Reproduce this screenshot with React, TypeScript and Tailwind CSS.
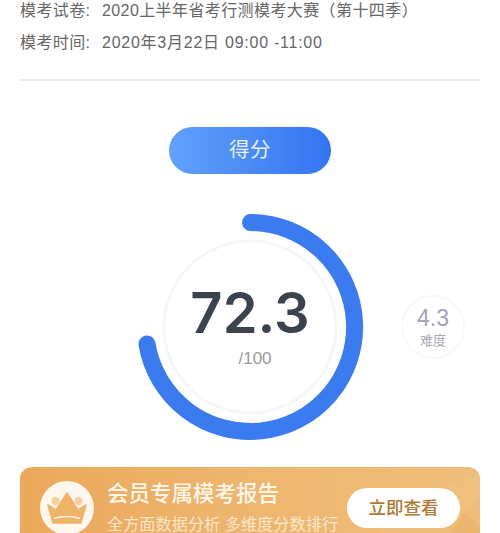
export default function App() {
  return (
    <div className="relative h-[533px] w-[500px] overflow-hidden bg-white font-['Liberation_Sans','Noto_Sans_CJK_SC',sans-serif]">
      <div className="-mt-[1px] px-5">
        <div className="flex flex-col gap-[8px] text-[16px] leading-[24px] tracking-[0.4px] text-[#666666]">
          <div className="flex"><span className="w-[82px]">模考试卷:</span><span>2020上半年省考行测模考大赛{"\uFF08"}第十四季{"\uFF09"}</span></div>
          <div className="flex"><span className="w-[82px]">模考时间:</span><span className="tracking-[0.75px]">2020年3月22日 09:00 -11:00</span></div>
        </div>
        <div className="mt-[24px] h-[2px] bg-[#e8e8e8]" />
      </div>
      <div className="mt-[46px] flex justify-center">
        <div className="flex h-[47px] w-[162px] items-center justify-center rounded-full bg-gradient-to-r from-[#62a1fb] to-[#3374f2] text-[20.5px] tracking-[0.5px] text-[#e8f0fd]">得分</div>
      </div>
      <div className="mt-[33px] flex h-[240px] items-center pl-[130px]">
        <div className="relative h-[240px] w-[240px] shrink-0">
          <svg viewBox="0 0 240 240" className="h-[240px] w-[240px]">
            <circle cx="120" cy="120" r="86" fill="#fff" stroke="#f6f6f7" strokeWidth="3" />
            <path d="M120.5 15.5 A104.5 104.5 0 1 1 17 137" fill="none" stroke="#3b7bf0" strokeWidth="17" strokeLinecap="round" />
          </svg>
          <div className="absolute inset-0 flex flex-col items-center">
            <div className="mt-[74px] font-['Inter'] text-[56px] font-semibold leading-[64px] text-[#3a434e]">72.3</div>
            <div className="ml-[10px] mt-[4px] text-[17px] leading-[20px] text-[#9a9a9a]">/100</div>
          </div>
        </div>
        <div className="ml-[31px] flex h-[64px] w-[64px] shrink-0 flex-col items-center justify-center rounded-full border-2 border-[#f8f8f9]">
          <div className="text-[23px] leading-[24px] text-[#a3a3b3]">4.3</div>
          <div className="mt-[3px] text-[13px] leading-[16px] text-[#a8a8b4]">难度</div>
        </div>
      </div>
      <div className="relative mx-5 mt-[20px] flex h-[80px] items-start overflow-hidden rounded-t-[12px] bg-gradient-to-r from-[#eba85a] via-[#eeb66e] to-[#efbd79] pl-[20px]">
        <svg viewBox="0 0 460 80" className="absolute inset-0 h-[80px] w-[460px]">
          <path d="M340 80 L400 30 L460 5 V30 L400 80 Z" fill="#f3c788" opacity="0.3" />
          <path d="M420 80 L445 45 L460 60 V80 Z" fill="#eaae62" opacity="0.5" />
        </svg>
        <div className="relative mt-[14px] flex h-[54px] w-[54px] shrink-0 items-center justify-center rounded-full bg-[#fdf7ee]">
          <svg viewBox="0 0 54 54" className="h-[54px] w-[54px]">
            <circle cx="15.5" cy="20" r="4" fill="#f4cf9f" />
            <circle cx="38.5" cy="20" r="4" fill="#f4cf9f" />
            <path d="M8 24 L16 29 L27 12 L38 29 L46 24 L41 42 H13 Z" fill="#eeb468" stroke="#eeb468" strokeWidth="1.5" strokeLinejoin="round" />
            <path d="M14 37.5 Q27 33.5 40 37.5" fill="none" stroke="#fdf3e4" strokeWidth="1.5" />
          </svg>
        </div>
        <div className="relative ml-[13px] mt-[13px] w-[240px] shrink-0">
          <div className="text-[21.5px] font-medium leading-[28px] text-[#fff6ea]">会员专属模考报告</div>
          <div className="mt-[5px] text-[16.2px] leading-[22px] text-[#fbe7cc]">全方面数据分析 多维度分数排行</div>
        </div>
        <div className="relative mt-[21px] flex h-[40px] w-[113px] shrink-0 items-center justify-center rounded-full bg-white text-[17.5px] font-medium text-[#b07a35]">立即查看</div>
      </div>
    </div>
  );
}
